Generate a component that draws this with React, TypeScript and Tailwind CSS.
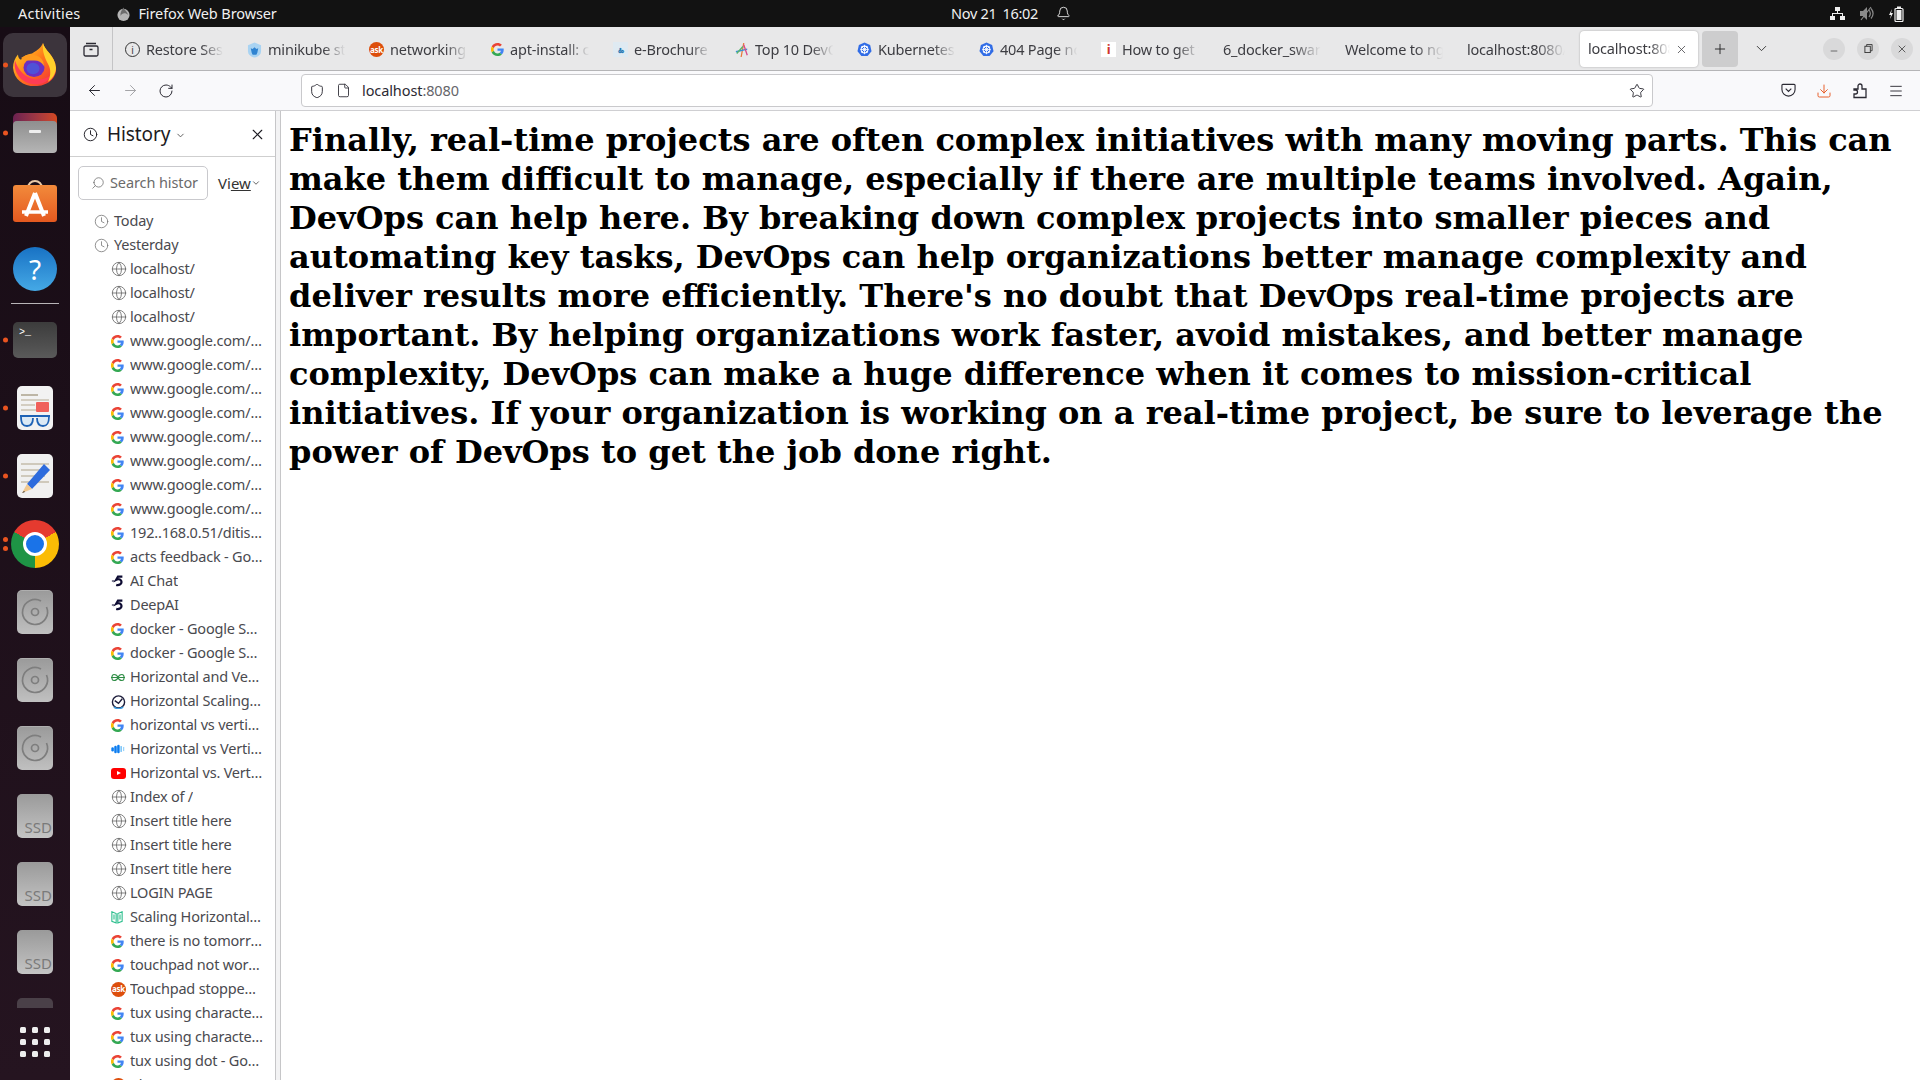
import { Globe, Clock, X, ChevronDown, ArrowLeft, ArrowRight, RotateCw, Star, Shield, File, Menu, Plus, Minus, Download, Search, Bell } from 'lucide-react';

const uiFont = "font-['Noto_Sans',sans-serif]";

function GoogleIcon() {
  return (
    <svg viewBox="0 0 48 48" className="w-[13px] h-[13px] shrink-0">
      <path fill="#EA4335" d="M24 9.500c3.500 0 6.700 1.200 9.200 3.600l6.900-6.900C35.900 2.400 30.500 0 24 0 14.600 0 6.500 5.400 2.600 13.200l8 6.200C12.500 13.600 17.800 9.500 24 9.500z" />
      <path fill="#4285F4" d="M46.900 24.500c0-1.600-.1-3.100-.4-4.500H24v9h12.900c-.6 3-2.200 5.500-4.700 7.200l7.700 6c4.500-4.200 7-10.300 7-17.700z" />
      <path fill="#FBBC05" d="M10.500 28.600A14.500 14.500 0 0 1 10.500 19.400l-8-6.200a24 24 0 0 0 0 21.600l8-6.200z" />
      <path fill="#34A853" d="M24 48c6.500 0 11.900-2.100 15.900-5.800l-7.700-6c-2.200 1.400-4.900 2.300-8.200 2.300-6.200 0-11.500-4.200-13.400-9.800l-8 6.200C6.500 42.600 14.600 48 24 48z" />
    </svg>
  );
}

function AskIcon({ size = 15 }: { size?: number }) {
  return (
    <span
      style={{ width: size, height: size }}
      className="shrink-0 rounded-full bg-[#dd4e0c] text-white text-[8px] font-bold flex items-center justify-center leading-none"
    >
      ask
    </span>
  );
}

function K8sIcon() {
  return (
    <svg viewBox="0 0 16 16" className="w-[15px] h-[15px] shrink-0">
      <path fill="#326de6" d="M8 0.500 14 3.300 15.500 9.800 11.300 15H4.700L0.500 9.800 2 3.300z" />
      <circle cx="8" cy="8" r="3.600" fill="none" stroke="#fff" strokeWidth="1.100" />
      <path stroke="#fff" strokeWidth="0.900" d="M8 3v10M3.500 8h9M4.800 4.800l6.400 6.400M11.200 4.800l-6.400 6.400" />
    </svg>
  );
}

function DeepAiIcon() {
  return (
    <svg viewBox="0 0 16 16" className="w-[14px] h-[14px] shrink-0">
      <path fill="none" stroke="#0e0c33" strokeWidth="2.600" d="M13 3H8L6 6.500c3-1.500 6 0 6 2.500s-3 4.500-6 3.500" />
      <path stroke="#0e0c33" strokeWidth="1.200" d="M1 8h3" />
    </svg>
  );
}

type Row = { label: string; icon: string };

const rows: Row[] = [
  { label: 'localhost/', icon: 'globe' },
  { label: 'localhost/', icon: 'globe' },
  { label: 'localhost/', icon: 'globe' },
  { label: 'www.google.com/sear', icon: 'g' },
  { label: 'www.google.com/sear', icon: 'g' },
  { label: 'www.google.com/sear', icon: 'g' },
  { label: 'www.google.com/sear', icon: 'g' },
  { label: 'www.google.com/sear', icon: 'g' },
  { label: 'www.google.com/sear', icon: 'g' },
  { label: 'www.google.com/sear', icon: 'g' },
  { label: 'www.google.com/sear', icon: 'g' },
  { label: '192..168.0.51/ditiss/index', icon: 'g' },
  { label: 'acts feedback - Google', icon: 'g' },
  { label: 'AI Chat', icon: 'deep' },
  { label: 'DeepAI', icon: 'deep' },
  { label: 'docker - Google Search', icon: 'g' },
  { label: 'docker - Google Search', icon: 'g' },
  { label: 'Horizontal and Vertical', icon: 'gfg' },
  { label: 'Horizontal Scaling vs V', icon: 'clock' },
  { label: 'horizontal vs vertical s', icon: 'g' },
  { label: 'Horizontal vs Vertical', icon: 'bars' },
  { label: 'Horizontal vs. Vertical', icon: 'yt' },
  { label: 'Index of /', icon: 'globe' },
  { label: 'Insert title here', icon: 'globe' },
  { label: 'Insert title here', icon: 'globe' },
  { label: 'Insert title here', icon: 'globe' },
  { label: 'LOGIN PAGE', icon: 'globe' },
  { label: 'Scaling Horizontally a', icon: 'book' },
  { label: 'there is no tomorrow -', icon: 'g' },
  { label: 'touchpad not working', icon: 'g' },
  { label: 'Touchpad stopped wor', icon: 'ask' },
  { label: 'tux using character - G', icon: 'g' },
  { label: 'tux using character - G', icon: 'g' },
  { label: 'tux using dot - Google', icon: 'g' },
  { label: 'ubuntu', icon: 'ask' },
];

function RowIcon({ icon }: { icon: string }) {
  if (icon === 'g') return <GoogleIcon />;
  if (icon === 'globe') return <Globe size={16} strokeWidth={1.3} className="text-[#6d6d6d] shrink-0" />;
  if (icon === 'deep') return <DeepAiIcon />;
  if (icon === 'ask') return <AskIcon />;
  if (icon === 'yt')
    return (
      <span className="w-[15px] h-[11px] rounded-[3px] bg-[#f00] shrink-0 flex items-center justify-center">
        <span className="border-l-[4px] border-l-white border-y-[2.5px] border-y-transparent" />
      </span>
    );
  if (icon === 'gfg')
    return (
      <svg viewBox="0 0 16 10" className="w-[14px] h-[9px] shrink-0" fill="none" stroke="#2f8d46" strokeWidth="1.200">
        <path d="M0 5h16M8 5C7 2 5 1.500 3.500 1.500S1 3 1 5s1 3.500 2.500 3.500S7 8 8 5c1-3 3-3.500 4.500-3.500S15 3 15 5s-1 3.500-2.500 3.500S9 8 8 5z" />
      </svg>
    );
  if (icon === 'clock')
    return (
      <svg viewBox="0 0 16 16" className="w-[15px] h-[15px] shrink-0" fill="none">
        <circle cx="8" cy="8.500" r="6.500" stroke="#1d1d3b" strokeWidth="1.500" />
        <path d="M4 7l4 3 4-5" stroke="#1d1d3b" strokeWidth="1.500" />
        <path d="M3 14c3 2 7 2 10 0" stroke="#3b9be0" strokeWidth="1.500" />
      </svg>
    );
  if (icon === 'bars')
    return (
      <svg viewBox="0 0 16 12" className="w-[14px] h-[10px] shrink-0">
        <rect x="0" y="4" width="3" height="5" rx="1.500" fill="#0a7cf0" />
        <rect x="3.500" y="2" width="3" height="9" rx="1.500" fill="#0a7cf0" />
        <rect x="7" y="1" width="3" height="10" rx="1.500" fill="#0a7cf0" />
        <rect x="11" y="2.500" width="1.500" height="7" fill="#58b6f7" />
        <rect x="14" y="3.500" width="1.500" height="5" fill="#9ad4fb" />
      </svg>
    );
  return (
    <svg viewBox="0 0 14 16" className="w-[12px] h-[14px] shrink-0" fill="none" stroke="#2fbf8f" strokeWidth="1.300">
      <path d="M1 2l5 2v11l-5-2zM13 2L8 4v11l5-2zM3.500 5v6M10.500 5v6" />
    </svg>
  );
}

function Sidebar() {
  return (
    <aside className="w-[205px] shrink-0 flex flex-col overflow-hidden bg-white">
      <div className="h-[46px] shrink-0 flex items-center pl-[13px] pr-[9px] pt-[2px] border-b border-[#cfcfcf] text-[#1c1b22]">
        <Clock size={15} strokeWidth={1.5} />
        <span className="ml-[9px] text-[19px] tracking-[-0.1px]">History</span>
        <ChevronDown size={11} className="ml-[5px] mt-[2px] text-[#555]" />
        <X size={17} strokeWidth={1.6} className="ml-auto" />
      </div>
      <div className="shrink-0 flex items-center pt-[9px] pl-[8px]">
        <div className="w-[130px] h-[34px] border border-[#c9c9cd] rounded-[5px] flex items-center pl-[12px] overflow-hidden text-[#6b6b6b]">
          <Search size={14} strokeWidth={1.3} className="-scale-x-100 shrink-0" />
          <span className="ml-[5px] text-[14.500px] whitespace-nowrap tracking-[-0.1px]">Search histor</span>
        </div>
        <span className="ml-[10px] text-[15px] text-[#333]">
          Vi<span className="underline">ew</span>
        </span>
        <ChevronDown size={10} className="text-[#444]" />
      </div>
      <div className="flex flex-col pt-[9px] text-[14.500px] text-[#4a4a4f] tracking-[-0.2px]">
        {['Today', 'Yesterday'].map((g) => (
          <div key={g} className="h-[24px] shrink-0 flex items-center pl-[24px] gap-[5px]">
            <Clock size={15} strokeWidth={1.2} className="text-[#6d6d6d]" />
            <span>{g}</span>
          </div>
        ))}
        {rows.map((r, i) => (
          <div key={i} className="h-[24px] shrink-0 flex items-center pl-[41px] pr-[11px]">
            <span className="w-[19px] shrink-0">
              <RowIcon icon={r.icon} />
            </span>
            <span className="truncate">{r.label}</span>
          </div>
        ))}
      </div>
    </aside>
  );
}

const tabs: { label: string; icon: React.ReactNode }[] = [
  { label: 'Restore Session', icon: <span className="w-[15px] h-[15px] rounded-full border border-[#333] text-[10px] leading-none flex items-center justify-center shrink-0">i</span> },
  {
    label: 'minikube start',
    icon: (
      <svg viewBox="0 0 16 16" className="w-[15px] h-[16px] shrink-0">
        <path fill="#a9d3f2" d="M8 0l7 3v6c0 4-3 6-7 7-4-1-7-3-7-7V3z" />
        <path fill="#2f83d1" d="M4 6l2 1 2-2 2 2 2-1-1 5-1 2H6l-1-2z" />
      </svg>
    ),
  },
  { label: 'networking', icon: <AskIcon /> },
  { label: 'apt-install: c', icon: <GoogleIcon /> },
  { label: 'e-Brochure', icon: <span className="w-[15px] h-[15px] bg-[#dfeaf2] text-[#2a7ab5] text-[9px] font-bold leading-none flex items-center justify-center shrink-0">ಹಿ</span> },
  {
    label: 'Top 10 DevOps',
    icon: (
      <svg viewBox="0 0 16 16" className="w-[14px] h-[16px] shrink-0" fill="none" strokeWidth="1.500">
        <path d="M10 0L7 16" stroke="#e8793a" />
        <path d="M1 10L14 7" stroke="#3a8fd9" />
        <path d="M10 2L14 14" stroke="#d94a8a" />
        <path d="M9 4L2 12" stroke="#59b36a" />
      </svg>
    ),
  },
  { label: 'Kubernetes', icon: <K8sIcon /> },
  { label: '404 Page not', icon: <K8sIcon /> },
  { label: 'How to get t', icon: <span className="w-[15px] h-[15px] bg-white text-[#d0342c] font-bold text-[13px] leading-none flex items-center justify-center shrink-0">i</span> },
  { label: '6_docker_swarm', icon: null },
  { label: 'Welcome to nginx', icon: null },
  { label: 'localhost:8080/', icon: null },
];

function Tab({ label, icon }: { label: string; icon: React.ReactNode }) {
  return (
    <div className="w-[122px] shrink-0 flex items-center pl-[12px] pr-[10px] pt-[2px] gap-[6px] text-[#3d3d42] text-[14.500px] tracking-[-0.2px]">
      {icon}
      <span className="flex-1 min-w-0 overflow-hidden whitespace-nowrap [mask-image:linear-gradient(to_right,black_70%,transparent_98%)]">
        {label}
      </span>
    </div>
  );
}

function Browser() {
  return (
    <div className="flex-1 min-w-0 flex flex-col bg-white">
      <div className="h-[44px] shrink-0 flex bg-[#e8e8e9] border-b border-[#b5b5b7]">
        <div className="w-[43px] shrink-0 border-r border-[#c4c4c6] flex items-center justify-center">
          <svg viewBox="0 0 16 16" className="w-[16px] h-[16px]" fill="none" stroke="#2b2a33" strokeWidth="1.300">
            <rect x="1" y="5" width="14" height="10" rx="1.500" />
            <path d="M3 2.500h10M6.500 8.500h3" />
          </svg>
        </div>
        <div className="flex items-stretch">
          {tabs.map((t) => (
            <Tab key={t.label} label={t.label} icon={t.icon} />
          ))}
        </div>
        <div className="w-[118px] shrink-0 h-[36px] mt-[4px] ml-[3px] bg-white rounded-[4px] shadow-[0_0_2px_rgba(0,0,0,0.3)] flex items-center pl-[8px] text-[#3d3d42] text-[14.500px] tracking-[-0.2px]">
          <span className="overflow-hidden whitespace-nowrap w-[82px] [mask-image:linear-gradient(to_right,black_75%,transparent)]">localhost:8080</span>
          <X size={13} strokeWidth={1.4} className="ml-[5px]" />
        </div>
        <div className="w-[36px] h-[36px] mt-[4px] ml-[4px] rounded-[4px] bg-[#cdcdce] flex items-center justify-center shrink-0">
          <Plus size={16} strokeWidth={1.4} className="text-[#222]" />
        </div>
        <ChevronDown size={17} strokeWidth={1.3} className="ml-[15px] mt-[13px] text-[#333] shrink-0" />
        <div className="ml-auto flex items-center gap-[12px] pr-[7px] text-[#333]">
          <span className="w-[22px] h-[22px] rounded-full bg-[#d9d9da] flex items-center justify-center"><Minus size={10} strokeWidth={1.6} className="mt-[5px]" /></span>
          <span className="w-[22px] h-[22px] rounded-full bg-[#d9d9da] flex items-center justify-center">
            <svg viewBox="0 0 10 10" className="w-[9px] h-[9px]" fill="none" stroke="currentColor" strokeWidth="1"><rect x="1" y="2.500" width="6" height="7" /><path d="M3 2.500V.500h6v7H7" /></svg>
          </span>
          <span className="w-[22px] h-[22px] rounded-full bg-[#d9d9da] flex items-center justify-center"><X size={12} strokeWidth={1.5} /></span>
        </div>
      </div>
      <div className="h-[40px] shrink-0 flex items-center bg-[#f9f9fb] border-b border-[#cfcfd2] text-[#2b2a33]">
        <ArrowLeft size={17} strokeWidth={1.4} className="ml-[16px]" />
        <ArrowRight size={17} strokeWidth={1.4} className="ml-[19px] text-[#a3a3a6]" />
        <RotateCw size={16} strokeWidth={1.5} className="ml-[19px]" />
        <div className="ml-[127px] w-[1352px] h-[33px] flex items-center bg-white border border-[#c9c9cc] rounded-[4px] pl-[7px] pr-[7px]">
          <Shield size={16} strokeWidth={1.4} />
          <File size={15} strokeWidth={1.4} className="ml-[11px]" />
          <span className="ml-[11px] text-[14.500px] tracking-[-0.1px]">
            localhost<span className="text-[#65656a]">:8080</span>
          </span>
          <Star size={16} strokeWidth={1.4} className="ml-auto" />
        </div>
        <svg viewBox="0 0 16 16" className="ml-[128px] w-[15px] h-[15px]" fill="none" stroke="currentColor" strokeWidth="1.200">
          <path d="M2 1.500h12a1 1 0 0 1 1 1V7a7 7 0 0 1-14 0V2.500a1 1 0 0 1 1-1zM5 6l3 3 3-3" />
        </svg>
        <Download size={16} strokeWidth={1.5} className="ml-[20px] text-[#e8602c]" />
        <svg viewBox="0 0 16 16" className="ml-[20px] w-[16px] h-[16px]" fill="none" stroke="currentColor" strokeWidth="1.300">
          <path d="M2 6h4V3a2 2 0 0 1 4 0v3h4v8.500H2V11h1.500a2 2 0 0 0 0-4H2z" />
        </svg>
        <Menu size={16} strokeWidth={1.4} className="ml-[20px]" />
      </div>
      <div className="flex-1 min-h-0 flex">
        <Sidebar />
        <div className="w-[6px] shrink-0 border-x border-[#c6c6c8] bg-[#f3f3f4]" />
        <main className="flex-1 min-w-0 px-[8px] pt-[10px] font-['DejaVu_Serif',serif] font-bold text-[32px] leading-[39px] text-black">
          Finally, real-time projects are often complex initiatives with many moving parts. This can make them difficult to manage, especially if there are multiple teams involved. Again, DevOps can help here. By breaking down complex projects into smaller pieces and automating key tasks, DevOps can help organizations better manage complexity and deliver results more efficiently. There's no doubt that DevOps real-time projects are important. By helping organizations work faster, avoid mistakes, and better manage complexity, DevOps can make a huge difference when it comes to mission-critical initiatives. If your organization is working on a real-time project, be sure to leverage the power of DevOps to get the job done right.
        </main>
      </div>
    </div>
  );
}

function FirefoxLogo() {
  return (
    <svg viewBox="0 0 44 50" className="w-[44px] h-[44px]" preserveAspectRatio="none">
      <defs>
        <linearGradient id="ffa" x1="0" y1="0" x2="1" y2="1">
          <stop offset="0" stopColor="#ffe226" />
          <stop offset="0.5" stopColor="#ff7a1a" />
          <stop offset="1" stopColor="#f0233f" />
        </linearGradient>
      </defs>
      <path fill="url(#ffa)" d="M30 0c1 8 12 14 13 28 1 12-9 21-21 21S1 41 0 28c0-6 2-11 5-15 0 3 1 5 3 6 2-4 6-6 11-7 4-3 9-6 11-12z" />
      <path fill="#ff3d55" d="M2 20c-2 12 5 26 20 27 8 0 14-4 16-10-5 4-13 6-20 3C10 37 5 30 2 20z" />
      <path fill="#ffd02b" d="M30 0c1 8 12 14 13 28 0 6-3 12-8 16 3-7 3-14 0-20-3-7-6-14-5-24z" />
      <circle cx="21" cy="28" r="10.500" fill="#6b2fc0" />
      <path fill="#ff9a1f" d="M8 17c4-4 12-5 17-2 4 2 6 7 6 11-3-5-7-7-12-6-5 0-9-1-11-3z" />
      <circle cx="20" cy="29" r="6.500" fill="#4f52d8" />
    </svg>
  );
}

function Tile({ className, children }: { className?: string; children?: React.ReactNode }) {
  return <div className={`w-[36px] h-[44px] rounded-[5px] relative overflow-hidden ${className ?? ''}`}>{children}</div>;
}

function DiskTile() {
  return (
    <Tile className="bg-gradient-to-b from-[#9a9a9a] to-[#c0c0c0] shadow-[inset_0_1px_0_rgba(255,255,255,0.2)] flex items-center justify-center">
      <svg viewBox="0 0 30 30" className="w-[30px] h-[30px]" fill="none" stroke="#7e7e7e">
        <path strokeWidth="1.700" d="M21 4A12.500 12.500 0 1 0 26.500 10" />
        <circle cx="15" cy="15" r="3.500" strokeWidth="1.700" />
      </svg>
    </Tile>
  );
}

function SsdTile() {
  return (
    <Tile className="bg-gradient-to-b from-[#9a9a9a] to-[#c4c4c4] flex items-end justify-end overflow-visible">
      <span className="text-[15px] leading-[22px] text-[#7a7a7a] font-['Noto_Sans',sans-serif] pr-[1px]">SSD</span>
    </Tile>
  );
}

function DockItem({ dots = 0, active, children }: { dots?: number; active?: boolean; children: React.ReactNode }) {
  return (
    <div className="relative h-[68px] w-[70px] shrink-0 flex items-center justify-center">
      {active && <div className="absolute inset-x-[3px] inset-y-[2px] rounded-[10px] bg-[#3c343c]" />}
      <div className="absolute left-[3px] top-1/2 -translate-y-1/2 flex flex-col gap-[4px]">
        {Array.from({ length: dots }).map((_, i) => (
          <span key={i} className="block w-[5px] h-[5px] rounded-full bg-[#e95420]" />
        ))}
      </div>
      <div className="relative">{children}</div>
    </div>
  );
}

function Dock() {
  return (
    <nav className="w-[70px] shrink-0 flex flex-col bg-gradient-to-b from-[#170c15] to-[#251420]">
      <div className="h-[981px] pt-[4px] overflow-hidden flex flex-col shrink-0">
        <DockItem dots={1} active>
          <FirefoxLogo />
        </DockItem>
        <DockItem dots={1}>
          <div className="relative w-[44px] h-[40px]">
            <div className="absolute left-0 right-0 top-0 h-[20px] rounded-t-[5px] bg-gradient-to-r from-[#6b2150] to-[#d3481e]" />
            <div className="absolute left-0 right-0 top-[8px] bottom-0 rounded-[4px] bg-gradient-to-b from-[#8f8f8f] to-[#b5b5b5] flex justify-center">
              <span className="w-[12px] h-[3px] bg-[#eee] rounded-[1px] mt-[9px]" />
            </div>
          </div>
        </DockItem>
        <DockItem>
          <div className="relative w-[44px] h-[42px] pt-[5px]">
            <div className="absolute left-[14px] top-0 w-[16px] h-[10px] border-[2px] border-[#e8c9a8] rounded-t-[8px]" />
            <div className="relative h-[37px] rounded-[3px] bg-gradient-to-b from-[#f28a3b] to-[#e4581f]">
              <svg viewBox="0 0 44 37" className="absolute inset-0 w-[44px] h-[37px]" fill="none" stroke="#fff">
                <path strokeWidth="4" d="M22 8L13 31M22 8l9 23" />
                <path strokeWidth="3.500" d="M9 27h26" />
              </svg>
            </div>
          </div>
        </DockItem>
        <DockItem>
          <div className="w-[44px] h-[44px] rounded-full bg-gradient-to-b from-[#1872c4] to-[#45a9e6] text-white text-[28px] font-['Noto_Sans',sans-serif] flex items-center justify-center">
            ?
          </div>
        </DockItem>
        <div className="h-[1px] w-[48px] mx-auto bg-[#b9b5b8] shrink-0" />
        <div className="h-[2px] shrink-0" />
        <DockItem dots={1}>
          <div className="w-[44px] h-[36px] rounded-[5px] bg-gradient-to-b from-[#3c3c3c] to-[#5a5a5a] text-white text-[10px] font-['Liberation_Mono',monospace] leading-none pl-[6px] pt-[6px]">
            {'>_'}
          </div>
        </DockItem>
        <DockItem dots={1}>
          <Tile className="bg-[#f2f2f2] px-[4px] pt-[8px]">
            <div className="h-[2px] w-[17px] bg-[#bdb6a6] mb-[3px]" />
            <div className="h-[2px] w-[28px] bg-[#d3cdc1] mb-[3px]" />
            <div className="h-[2px] w-[14px] bg-[#d3cdc1] mb-[3px]" />
            <div className="h-[2px] w-[28px] bg-[#d3cdc1]" />
            <div className="absolute right-[4px] top-[16px] w-[13px] h-[10px] bg-[#f0605a] rounded-[1px]" />
            <svg viewBox="0 0 32 12" className="absolute left-[1px] bottom-[3px] w-[34px] h-[12px]" fill="#dbe9f5" stroke="#1e62b5" strokeWidth="1.800">
              <path d="M1 1h30M2 1c0 8 2 10 6 10s6-3 6-8M18 3c0 5 2 8 6 8s6-2 6-10" />
            </svg>
          </Tile>
        </DockItem>
        <DockItem dots={1}>
          <Tile className="bg-[#f0f0f0] px-[4px] pt-[9px]">
            <div className="h-[2px] w-[28px] bg-[#cfc9bc] mb-[4px]" />
            <div className="h-[2px] w-[24px] bg-[#cfc9bc] mb-[4px]" />
            <div className="h-[2px] w-[24px] bg-[#cfc9bc] mb-[4px]" />
            <div className="h-[2px] w-[28px] bg-[#cfc9bc]" />
            <svg viewBox="0 0 36 44" className="absolute inset-0 w-[36px] h-[44px]">
              <path fill="#2d6bdd" d="M10 30L27 10l6 6-18 19z" />
              <path fill="#f0c890" d="M10 30l5 5-10 4z" />
              <path fill="#333" d="M5 39l2-2 1 1z" />
            </svg>
          </Tile>
        </DockItem>
        <DockItem dots={2}>
          <div className="w-[48px] h-[48px] rounded-full bg-[conic-gradient(#e53a2f_0deg_60deg,#fbbc05_60deg_180deg,#1e9445_180deg_300deg,#e53a2f_300deg_360deg)] flex items-center justify-center">
            <span className="w-[18px] h-[18px] rounded-full bg-[#1a73e8] border-[3px] border-white box-content" />
          </div>
        </DockItem>
        <DockItem><DiskTile /></DockItem>
        <DockItem><DiskTile /></DockItem>
        <DockItem><DiskTile /></DockItem>
        <DockItem><SsdTile /></DockItem>
        <DockItem><SsdTile /></DockItem>
        <DockItem><SsdTile /></DockItem>
        <DockItem>
          <Tile className="bg-[#4a4048]" />
        </DockItem>
      </div>
      <div className="grid grid-cols-3 gap-[6px] w-[30px] mx-auto mt-[19px]">
        {Array.from({ length: 9 }).map((_, i) => (
          <span key={i} className="w-[6px] h-[6px] rounded-[1.500px] bg-[#eeeeee]" />
        ))}
      </div>
    </nav>
  );
}

export default function App() {
  return (
    <div className={`w-[1920px] h-[1080px] flex flex-col overflow-hidden ${uiFont}`}>
      <header className="h-[27px] shrink-0 bg-[#121212] text-[#f0f0f0] text-[14.500px] flex items-center relative">
        <span className="ml-[18px] tracking-[0.2px]">Activities</span>
        <svg viewBox="0 0 16 16" className="ml-[36px] w-[15px] h-[16px]">
          <circle cx="8" cy="9" r="6.500" fill="#b5b5b5" />
          <path fill="#6d6d6d" d="M8 1c1 3 4 4 5 8-3-3-7-2-8 1-1-3 1-6 3-9z" />
        </svg>
        <span className="ml-[7px] tracking-[-0.1px]">Firefox Web Browser</span>
        <div className="absolute left-[951px] flex items-center">
          <span className="tracking-[-0.3px]">Nov 21</span>
          <span className="ml-[6px] tracking-[-0.3px]">16:02</span>
          <Bell size={15} strokeWidth={1.4} className="ml-[18px]" />
        </div>
        <div className="ml-auto flex items-center pr-[16px] gap-[14px]">
          <svg viewBox="0 0 15 15" className="w-[15px] h-[15px]" fill="#f0f0f0">
            <rect x="5" y="1" width="5" height="4" />
            <rect x="0" y="10" width="5" height="4" />
            <rect x="10" y="10" width="5" height="4" />
            <path d="M7 5h1v2h5v3h-1V8H3v2H2V7h5z" />
          </svg>
          <svg viewBox="0 0 15 15" className="w-[15px] h-[15px]" fill="none" stroke="#8a8a8a">
            <path fill="#8a8a8a" stroke="none" d="M1 5h3l4-4v13l-4-4H1z" />
            <path strokeWidth="1.200" d="M10 4c1.500 2 1.500 5 0 7M12 2.500c2.500 3 2.500 7 0 10M2 14L12 1" />
          </svg>
          <svg viewBox="0 0 16 16" className="w-[16px] h-[16px]" fill="none" stroke="#f0f0f0">
            <path fill="#f0f0f0" stroke="none" d="M4 3L1 9h2l-1 4 3-6H3z" />
            <rect x="7" y="2.500" width="8" height="13" rx="1" strokeWidth="1.200" />
            <rect x="9" y="0.500" width="4" height="2" fill="#f0f0f0" stroke="none" />
            <rect x="8.500" y="4" width="5" height="10" fill="#f0f0f0" stroke="none" />
          </svg>
        </div>
      </header>
      <div className="flex-1 min-h-0 flex">
        <Dock />
        <Browser />
      </div>
    </div>
  );
}
